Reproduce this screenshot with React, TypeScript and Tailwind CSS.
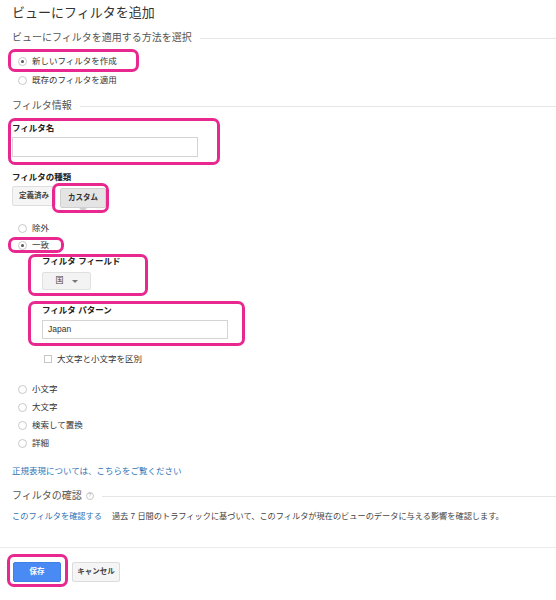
import React from "react";

const Pink = ({ className }: { className: string }) => (
  <span className={`pointer-events-none absolute rounded-[7px] border-[3px] border-[#e8288f] ${className}`} />
);

const Radio = ({ label, checked = false }: { label: string; checked?: boolean }) => (
  <div className="flex items-center h-[14px] pl-[6px] gap-[5px]">
    <span className="w-[9px] h-[9px] rounded-full border border-[#c9c9c9] bg-white flex items-center justify-center">
      {checked && <span className="w-[3px] h-[3px] rounded-full bg-[#555]" />}
    </span>
    <span className="text-[8.5px] leading-[14px]">{label}</span>
  </div>
);

const SectionHead = ({ children }: { children: React.ReactNode }) => (
  <div className="flex items-center gap-2 h-[14px]">
    <span className="text-[10px] leading-[14px] text-[#555] flex items-center gap-[4px] whitespace-nowrap">{children}</span>
    <div className="flex-1 h-px bg-[#e6e6e6]" />
  </div>
);

export default function App() {
  return (
    <div className="w-[556px] h-[600px] bg-white text-[#333] font-['Liberation_Sans','Noto_Sans_CJK_JP',sans-serif] overflow-hidden">
      <div className="pl-3 pt-[4px]">
        <h1 className="text-[13px] leading-[18px] text-[#333]">ビューにフィルタを追加</h1>

        <div className="mt-[9px]">
          <SectionHead>ビューにフィルタを適用する方法を選択</SectionHead>
        </div>

        {/* apply method */}
        <div className="mt-[9px] relative flex w-fit">
          <Radio label="新しいフィルタを作成" checked />
          <Pink className="-left-[4px] -right-[22px] -top-[5px] -bottom-[4px]" />
        </div>
        <div className="mt-[5px]">
          <Radio label="既存のフィルタを適用" />
        </div>

        <div className="mt-[12px]">
          <SectionHead>フィルタ情報</SectionHead>
        </div>

        {/* filter name */}
        <div className="mt-[9px] relative w-[186px]">
          <div className="text-[8.5px] leading-[12px] font-bold text-[#222]">フィルタ名</div>
          <div className="mt-[3px] h-[20px] border border-[#d4d4d4] bg-white" />
          <Pink className="-left-[4px] -right-[22px] -top-[4px] -bottom-[8px]" />
        </div>

        <div className="mt-[14px] text-[8.5px] leading-[12px] font-bold text-[#222]">フィルタの種類</div>
        <div className="mt-[3px] flex items-start gap-[4px]">
          <div className="w-[44px] h-[20px] flex items-center justify-center bg-[#f5f5f5] border border-[#dedede] rounded-[2px] text-[7.5px] font-bold text-[#444]">
            定義済み
          </div>
          <div className="relative mt-[2px]">
            <div className="w-[46px] h-[20px] flex items-center justify-center bg-[#e4e4e4] border border-[#d0d0d0] rounded-[2px] text-[7.5px] font-bold text-[#333]">
              カスタム
            </div>
            <span className="absolute left-1/2 -translate-x-1/2 top-[20px] w-0 h-0 border-l-[4px] border-r-[4px] border-t-[4px] border-l-transparent border-r-transparent border-t-[#d0d0d0]" />
            <Pink className="-left-[8px] -right-[3px] -top-[5px] -bottom-[5px]" />
          </div>
        </div>

        <div className="mt-[13px]">
          <Radio label="除外" />
        </div>
        <div className="mt-[3px] relative flex w-fit">
          <Radio label="一致" checked />
          <Pink className="-left-[4px] -right-[15px] -top-[1px] -bottom-[1px]" />
        </div>

        {/* match options */}
        <div className="ml-[30px]">
          <div className="mt-[3px] relative w-[106px]">
            <div className="text-[8.5px] leading-[12px] font-bold text-[#222] whitespace-nowrap">フィルタ フィールド</div>
            <div className="mt-[5px] w-[49px] h-[18px] flex items-center justify-center gap-[8px] bg-[#f3f3f3] border border-[#e0e0e0] rounded-[2px] text-[8px] text-[#444]">
              <span>国</span>
              <span className="w-0 h-0 border-l-[3px] border-r-[3px] border-t-[3px] border-l-transparent border-r-transparent border-t-[#777]" />
            </div>
            <Pink className="-left-[14px] -right-[0px] -top-[1px] -bottom-[6px]" />
          </div>

          <div className="mt-[14px] relative w-[186px]">
            <div className="text-[8.5px] leading-[12px] font-bold text-[#222]">フィルタ パターン</div>
            <div className="mt-[4px] h-[19px] border border-[#d4d4d4] bg-white flex items-center px-[5px] text-[8.5px] text-[#333]">
              Japan
            </div>
            <Pink className="-left-[14px] -right-[17px] -top-[3px] -bottom-[7px]" />
          </div>

          <div className="mt-[13px] flex items-center h-[14px] pl-[2px] gap-[5px]">
            <span className="w-[8px] h-[8px] border border-[#c6c6c6] bg-white" />
            <span className="text-[8.5px] leading-[14px]">大文字と小文字を区別</span>
          </div>
        </div>

        <div className="mt-[16px] flex flex-col gap-[4px]">
          <Radio label="小文字" />
          <Radio label="大文字" />
          <Radio label="検索して置換" />
          <Radio label="詳細" />
        </div>

        <div className="mt-[14px] text-[8.5px] leading-[14px] text-[#2f73b6]">正規表現については、こちらをご覧ください</div>

        <div className="mt-[11px]">
          <SectionHead>
            フィルタの確認
            <span className="w-[8px] h-[8px] rounded-full border border-[#c8c8c8] text-[5.5px] leading-none text-[#aaa] flex items-center justify-center">?</span>
          </SectionHead>
        </div>

        <div className="mt-[7px] flex items-center h-[14px] gap-[10px] text-[8.2px] leading-[14px]">
          <span className="text-[#2f73b6]">このフィルタを確認する</span>
          <span className="text-[#444]">過去 7 日間のトラフィックに基づいて、このフィルタが現在のビューのデータに与える影響を確認します。</span>
        </div>
      </div>

      <div className="mt-[23px] h-px bg-[#ebebeb]" />

      <div className="pl-[13px] mt-[14px] flex items-center gap-[11px]">
        <div className="relative">
          <div className="w-[48px] h-[20px] flex items-center justify-center bg-[#4a8af4] border border-[#3f7fe6] rounded-[2px] text-[7.5px] font-bold text-white">
            保存
          </div>
          <Pink className="-left-[6px] -right-[7px] -top-[8px] -bottom-[5px]" />
        </div>
        <div className="w-[48px] h-[20px] flex items-center justify-center bg-[#f5f5f5] border border-[#dcdcdc] rounded-[2px] text-[7.5px] font-bold text-[#444]">
          キャンセル
        </div>
      </div>
    </div>
  );
}
